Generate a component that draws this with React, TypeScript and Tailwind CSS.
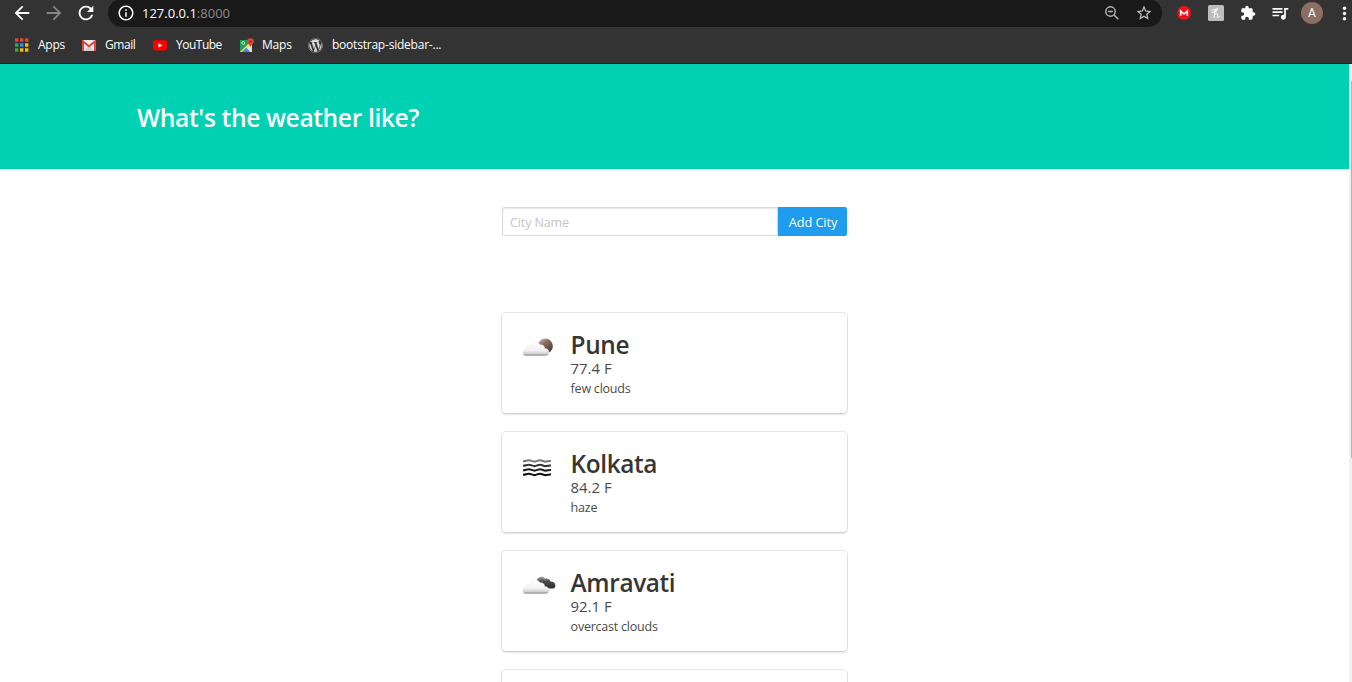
import type { ReactNode } from "react";
import {
  MdArrowBack,
  MdArrowForward,
  MdExtension,
  MdInfoOutline,
  MdMoreVert,
  MdQueueMusic,
  MdRefresh,
  MdStarBorder,
} from "react-icons/md";
import { FaWordpress } from "react-icons/fa";

function Slot({ children }: { children: ReactNode }) {
  return <div className="flex h-[26px] w-8 shrink-0 items-center justify-center">{children}</div>;
}

function ZoomOutIcon() {
  return (
    <svg width="14" height="14" viewBox="0 0 14 14" fill="none" stroke="#b8b8b8" strokeWidth="1.4">
      <circle cx="5.500" cy="5.500" r="4.700" />
      <path d="M3.200 5.500h4.600M9 9l4.300 4.300" />
    </svg>
  );
}

function AppsIcon() {
  const colors = ["#ea4335", "#ea4335", "#ea4335", "#34a853", "#4285f4", "#fbbc05", "#34a853", "#fbbc05", "#fbbc05"];
  return (
    <svg width="14" height="14" viewBox="0 0 14 14">
      {colors.map((c, i) => (
        <rect key={i} x={(i % 3) * 5} y={Math.floor(i / 3) * 5 + 0.3} width="3.4" height="3.4" fill={c} />
      ))}
    </svg>
  );
}

function GmailIcon() {
  return (
    <svg width="14" height="11" viewBox="0 0 14 11">
      <rect width="14" height="11" rx="0.8" fill="#e9e6e6" />
      <path d="M2 11 7 5.5 12 11Z" fill="#d2cece" />
      <path d="M2 1h10L7 5.4Z" fill="#f6f4f4" />
      <path d="M1 11V1.3L7 6.3 13 1.3V11" fill="none" stroke="#d8453b" strokeWidth="1.9" />
    </svg>
  );
}

function YouTubeIcon() {
  return (
    <svg width="14" height="11" viewBox="0 0 14 11">
      <rect y="0.3" width="14" height="10.2" rx="2.2" fill="#f00" />
      <path d="M5.5 3.2 9.4 5.4 5.5 7.6Z" fill="#fff" />
    </svg>
  );
}

function MapsIcon() {
  return (
    <svg width="16" height="15" viewBox="0 0 16 15">
      <path d="M1 2h12v12H1z" fill="#dfe3e8" />
      <path d="M1 2h9v4L1 14Z" fill="#1e9e58" />
      <path d="M1 14 9.5 5.5 11 7 4 14Z" fill="#f8d34a" />
      <path d="M3 14 7.2 9.8 11.4 14Z" fill="#4285f4" />
      <circle cx="4.2" cy="5" r="1.4" fill="none" stroke="#dff3e7" strokeWidth="0.8" />
      <path d="M11.5.2a3.3 3.3 0 0 1 3.3 3.3c0 2.3-2.7 3.2-3.3 6-.6-2.8-3.3-3.7-3.3-6A3.3 3.3 0 0 1 11.5.2Z" fill="#e5433a" />
      <circle cx="11.5" cy="3.5" r="1.1" fill="#7d231d" />
    </svg>
  );
}

function MegaIcon() {
  return (
    <svg width="14" height="14" viewBox="0 0 14 14">
      <circle cx="7" cy="7" r="7" fill="#f0101a" />
      <path d="M3.7 9.700V5L7 8l3.300-3v4.700" fill="none" stroke="#fff" strokeWidth="1.600" />
    </svg>
  );
}

function HoneyIcon() {
  return (
    <svg width="16" height="16" viewBox="0 0 16 16">
      <rect width="16" height="16" rx="1.6" fill="#bdbdbd" />
      <path
        d="M3.800 5.400C5 4.200 6 5.600 8.700 4.900M6 12.600C6.700 9.500 6.900 6.500 7.300 4.800 7.800 2.900 9.700 2.900 9.500 4.300 9.300 5.800 7.500 7 4.300 7.400M6.500 10C7.300 8 9.500 7.700 9.500 9.300 9.400 10.800 8.900 12.500 10 12.500c.9 0 1.300-.6 1.700-1.400"
        fill="none"
        stroke="#fff"
        strokeWidth="1"
        strokeLinecap="round"
      />
    </svg>
  );
}

const cloudPath =
  "M4.500 19.800C2.300 19.800 .8 18.900 .8 17c0-1.700 1-2.900 2.500-3.200-.1-2.700 2.200-4.200 4.400-3C8.800 6.200 15.300 4.200 18.200 8.700c2.600-.3 4.400 1.400 4.600 3.700 2.300 0 4.200 1.600 4.200 3.800 0 2.400-1.500 3.600-4 3.600Z";

function CloudGradient({ id }: { id: string }) {
  return (
    <linearGradient id={id} x1="0" y1="0" x2="0" y2="1">
      <stop offset="0" stopColor="#fff" />
      <stop offset="0.6" stopColor="#f2f2f2" />
      <stop offset="0.85" stopColor="#cfcfcf" />
      <stop offset="1" stopColor="#777" />
    </linearGradient>
  );
}

function FewClouds() {
  return (
    <svg width="36" height="24" viewBox="0 0 36 24">
      <defs>
        <CloudGradient id="few" />
        <linearGradient id="moon" x1="0" y1="0" x2="0.7" y2="1">
          <stop offset="0" stopColor="#d4c6bc" />
          <stop offset="0.4" stopColor="#8d7360" />
          <stop offset="1" stopColor="#49362b" />
        </linearGradient>
      </defs>
      <circle cx="23.3" cy="10" r="7.6" fill="url(#moon)" />
      <path d={cloudPath} fill="url(#few)" stroke="#e2e2e2" strokeWidth="0.4" />
    </svg>
  );
}

function Haze() {
  return (
    <svg width="36" height="24" viewBox="0 0 36 24" fill="none" strokeWidth="2.1">
      {["#777", "#333", "#1c1c1c", "#111"].map((c, i) => (
        <path
          key={c}
          transform={`translate(0 ${i * 4.5 + 0.8})`}
          d="M1 5.400c2.300.2 3.400-1 5.800-1s3.400 1.400 5.800 1.400S15.600 4.400 18 4.400s3.300 1.400 5.600 1.400S27 4.800 29 5.200"
          stroke={c}
        />
      ))}
    </svg>
  );
}

function Overcast() {
  return (
    <svg width="36" height="24" viewBox="0 0 36 24">
      <defs>
        <CloudGradient id="over" />
        <linearGradient id="dark" x1="0" y1="0" x2="0" y2="1">
          <stop offset="0" stopColor="#a0a0a0" />
          <stop offset="0.4" stopColor="#4a4a4a" />
          <stop offset="1" stopColor="#2c2c2c" />
        </linearGradient>
      </defs>
      <path
        d="M14.500 8.500C14.500 3.500 20 .8 23.200 4.800c2.300-1 4.700.3 5.200 2.700 2.500-.2 5 1.500 5 3.900 0 2.200-1.500 3.200-3.700 3.200H20Z"
        fill="url(#dark)"
      />
      <path d={cloudPath} fill="url(#over)" stroke="#e2e2e2" strokeWidth="0.4" />
    </svg>
  );
}

function BrowserChrome() {
  return (
    <header className="h-16 shrink-0 overflow-hidden border-b border-[#232323] bg-[#333333] text-white">
      <div className="flex h-[27px] overflow-hidden pl-1.5">
        <Slot><MdArrowBack size={22} /></Slot>
        <Slot><MdArrowForward size={22} color="#858585" /></Slot>
        <Slot><MdRefresh size={22} /></Slot>
        <div className="-mt-px ml-1.5 flex h-7 w-[1054px] shrink-0 items-center rounded-full bg-[#191919] pr-0.5 pl-[9px]">
          <MdInfoOutline size={18} />
          <span className="ml-[7px] flex-1 text-[13px] leading-none">
            127.0.0.1<span className="text-[#8c8c8c]">:8000</span>
          </span>
          <Slot><ZoomOutIcon /></Slot>
          <Slot><MdStarBorder size={18} color="#c4c4c4" /></Slot>
        </div>
        <div className="ml-1.5 flex shrink-0">
          <Slot><MegaIcon /></Slot>
          <Slot><HoneyIcon /></Slot>
          <Slot><MdExtension size={16} /></Slot>
          <Slot><MdQueueMusic size={20} /></Slot>
          <Slot>
            <span className="flex size-[22px] shrink-0 items-center justify-center rounded-full bg-[#8d6e63] font-['Roboto',sans-serif] text-[12px]">A</span>
          </Slot>
          <Slot><MdMoreVert size={21} /></Slot>
        </div>
      </div>
      <nav className="flex h-9 items-center text-[12px] leading-4 tracking-[-0.22px] whitespace-nowrap">
        <div className="ml-[15px] flex w-[67px] items-center gap-[9px]"><AppsIcon />Apps</div>
        <div className="flex w-[71px] items-center gap-[9px]"><GmailIcon /><span className="tracking-[-0.45px]">Gmail</span></div>
        <div className="flex w-[86px] items-center gap-[9px]"><YouTubeIcon /><span className="tracking-[-0.5px]">YouTube</span></div>
        <div className="flex w-[69px] items-center gap-[7px]"><MapsIcon />Maps</div>
        <div className="flex items-center gap-[9px]"><FaWordpress size={15} color="#d8d8d8" />bootstrap-sidebar-...</div>
      </nav>
    </header>
  );
}

const cities = [
  { name: "Pune", temp: "77.4 F", text: "few clouds", icon: <FewClouds /> },
  { name: "Kolkata", temp: "84.2 F", text: "haze", icon: <Haze /> },
  { name: "Amravati", temp: "92.1 F", text: "overcast clouds", icon: <Overcast /> },
];

const cardClass =
  "h-[100px] shrink-0 rounded-[4px] bg-white shadow-[0_2px_2px_rgba(10,10,10,0.1),0_0_0_1px_rgba(10,10,10,0.1)]";

export default function App() {
  return (
    <div className="flex h-[682px] w-[1352px] flex-col overflow-hidden bg-white font-['Open_Sans',sans-serif]">
      <BrowserChrome />
      <div className="flex min-h-0 flex-1">
        <main className="w-[1349px] overflow-hidden">
          <section className="flex h-[105px] items-center bg-[#00d1b2] pt-[3px] pl-[137px]">
            <h1 className="text-[24.6px] leading-7 font-semibold tracking-[-0.38px] text-white">What's the weather like?</h1>
          </section>
          <div className="ml-[502px] w-[345px] pt-[38px]">
            <form className="flex h-[29px]">
              <input
                placeholder="City Name"
                className="w-[276px] rounded-l-[2px] border border-[#dbdbdb] px-[7px] pt-[3px] text-[12.6px] tracking-[-0.15px] shadow-[inset_0_1px_2px_rgba(10,10,10,0.1)] outline-none placeholder:text-[#c6c6c6]"
              />
              <button type="button" className="w-[69px] rounded-r-[2px] bg-[#209cee] pt-[2px] pl-px text-[12.8px] tracking-[-0.1px] text-white">
                Add City
              </button>
            </form>
            <div className="mt-[77px] flex flex-col gap-[19px]">
              {cities.map((c) => (
                <article key={c.name} className={`${cardClass} flex pt-[18px] pl-5`}>
                  <div className="mt-[5px] w-[48.6px]">{c.icon}</div>
                  <div className="text-[#4a4a4a]">
                    <h2 className="text-[24.4px] leading-[27px] font-semibold tracking-[-0.38px] text-[#363636]">{c.name}</h2>
                    <p className="text-[14.9px] leading-5">{c.temp}</p>
                    <p className="pt-px text-[12.5px] leading-5 tracking-[-0.22px]">{c.text}</p>
                  </div>
                </article>
              ))}
              <article className={cardClass} />
            </div>
          </div>
        </main>
        <div className="flex w-[3px] justify-end bg-[#f1f1f1] pt-[17px]">
          <div className="h-[377px] w-px bg-[#b4b4b4]" />
        </div>
      </div>
    </div>
  );
}
